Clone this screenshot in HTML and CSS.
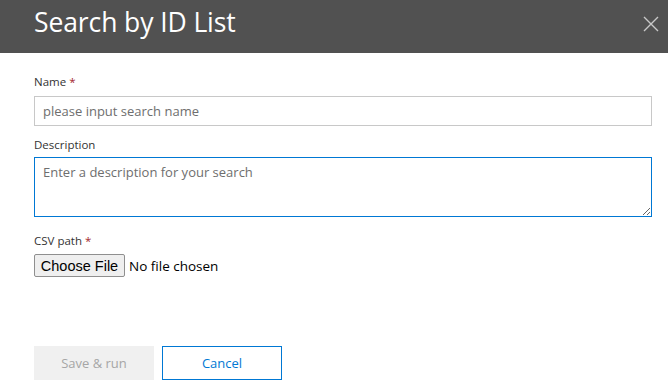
FILE: index.html
```html
<!DOCTYPE html>
<html lang="en">
<head>
<meta charset="utf-8">
<title>Search by ID List</title>
<link rel="stylesheet" href="styles.css">
</head>
<body>
<div class="dialog">
  <header class="dialog-header">
    <h1 class="dialog-title">Search by ID List</h1>
    <button class="close-btn" aria-label="Close">
      <svg width="16" height="16" viewBox="0 0 16 16"><path d="M1 1 L15 15 M15 1 L1 15" stroke="#c8c8c8" stroke-width="1.4" fill="none"/></svg>
    </button>
  </header>
  <form class="dialog-body">
    <div class="field field-name">
      <label class="field-label">Name <span class="req">*</span></label>
      <input class="text-input" type="text" placeholder="please input search name">
    </div>
    <div class="field field-desc">
      <label class="field-label">Description</label>
      <textarea class="text-area" placeholder="Enter a description for your search"></textarea>
    </div>
    <div class="field field-csv">
      <label class="field-label">CSV path <span class="req">*</span></label>
      <label class="file-input">
        <span class="file-btn">Choose File</span>
        <span class="file-name">No file chosen</span>
      </label>
    </div>
    <div class="actions">
      <button type="button" class="btn btn-primary" disabled>Save &amp; run</button>
      <button type="button" class="btn btn-default">Cancel</button>
    </div>
  </form>
</div>
</body>
</html>
```
FILE: styles.css
```css
html, body {
  margin: 0;
  padding: 0;
  background: #ffffff;
}
body {
  font-family: "Open Sans", "Noto Sans", sans-serif;
  color: #333333;
}
.dialog {
  width: 668px;
  height: 392px;
  display: flex;
  flex-direction: column;
}
.dialog-header {
  height: 53px;
  background: #515151;
  display: flex;
  align-items: center;
  justify-content: space-between;
  padding: 0 9px 0 34px;
  box-sizing: border-box;
}
.dialog-title {
  margin: 0 0 10px 0;
  font-size: 26.5px;
  line-height: 36px;
  font-weight: 400;
  color: #ffffff;
  letter-spacing: -0.1px;
}
.close-btn {
  background: none;
  border: 0;
  padding: 0;
  width: 16px;
  height: 16px;
  margin: 0 0 6px 0;
  display: flex;
}
.dialog-body {
  padding: 21px 16px 0 34px;
  display: flex;
  flex-direction: column;
}
.field {
  display: flex;
  flex-direction: column;
}
.field-label {
  font-size: 11.5px;
  line-height: 16px;
  color: #333333;
}
.req {
  color: #a4262c;
}
.text-input {
  margin-top: 6px;
  height: 30px;
  box-sizing: border-box;
  border: 1px solid #c8c8c8;
  padding: 0 8px;
  font-family: "Open Sans", sans-serif;
  font-size: 13px;
  color: #333;
  outline: none;
}
.text-input::placeholder,
.text-area::placeholder {
  color: #6e6e6e;
}
.field-desc {
  margin-top: 11px;
}
.text-area {
  margin-top: 4px;
  height: 60px;
  box-sizing: border-box;
  border: 1px solid #0078d4;
  padding: 5px 8px;
  font-family: "Open Sans", sans-serif;
  font-size: 13px;
  outline: none;
  resize: vertical;
}
.field-csv {
  margin-top: 16px;
}
.file-input {
  margin-top: 5px;
  display: flex;
  align-items: center;
  gap: 4px;
}
.file-btn {
  width: 91px;
  height: 23px;
  box-sizing: border-box;
  border: 1px solid #8f8f8f;
  border-radius: 2px;
  background: #efefef;
  font-family: "Liberation Sans", Arial, sans-serif;
  font-size: 14.5px;
  color: #000;
  display: flex;
  align-items: center;
  justify-content: center;
}
.file-name {
  font-size: 13.5px;
  color: #000;
}
.actions {
  margin-top: 69px;
  display: flex;
  gap: 8px;
}
.btn {
  width: 120px;
  height: 34px;
  box-sizing: border-box;
  font-family: "Open Sans", sans-serif;
  font-size: 13px;
  padding: 0;
}
.btn-primary {
  background: #f0f0f0;
  border: 0;
  color: #a6a6a6;
}
.btn-default {
  background: #ffffff;
  border: 1px solid #0078d4;
  color: #0078d4;
}
```
